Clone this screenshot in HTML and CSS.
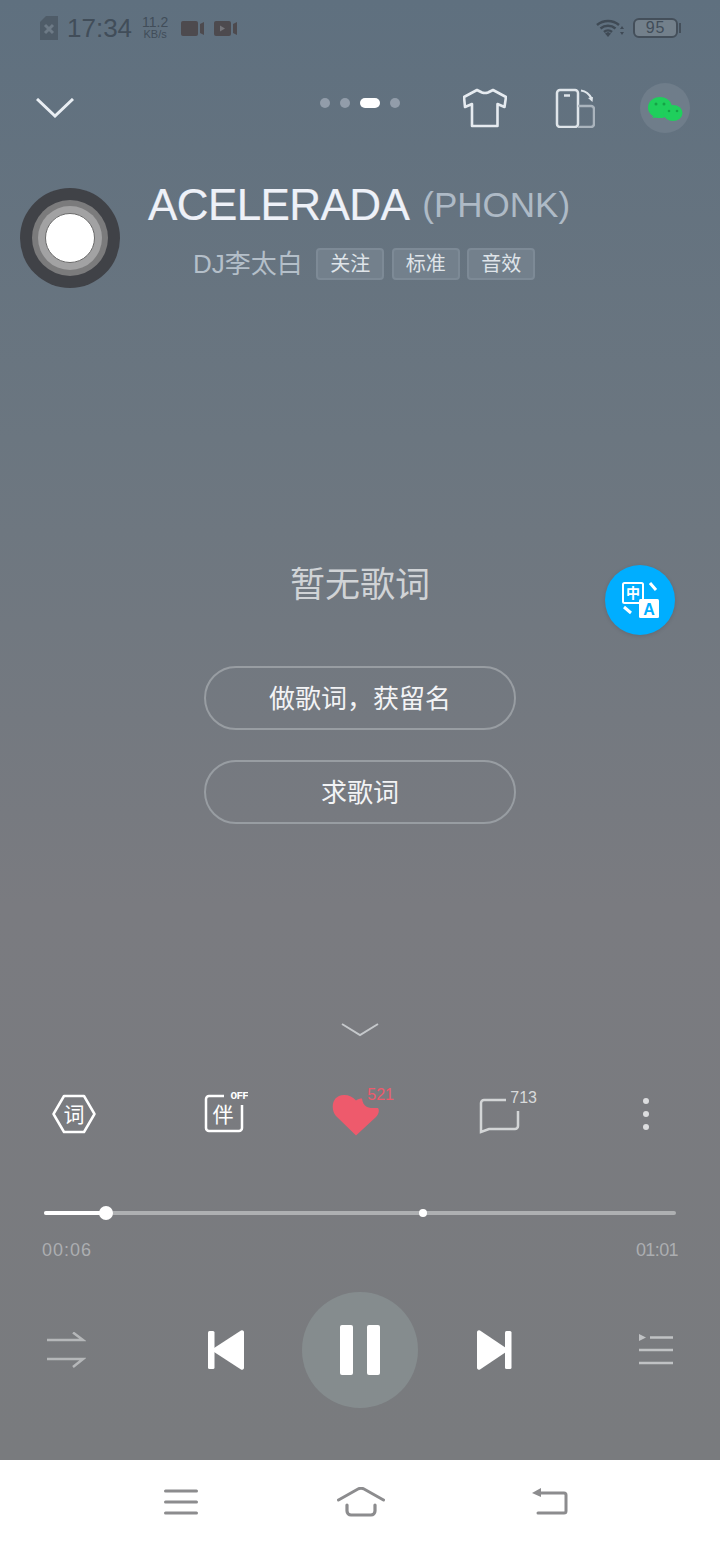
FILE: index.html
```html
<!DOCTYPE html>
<html lang="zh-CN">
<head>
  <meta charset="UTF-8">
  <meta name="viewport" content="width=device-width, initial-scale=1.0">
  <title>ACELERADA (PHONK)</title>
  <link rel="stylesheet" href="styles.css">
</head>
<body>
  <div class="screen">
    <div class="player">

      <!-- status bar -->
      <div class="status">
        <svg class="sd" width="18" height="24" viewBox="0 0 18 24"><path d="M6 0h12v24H0V6z" fill="#4f5c68"/><path d="M5 9l8 8M13 9l-8 8" stroke="#6d7a86" stroke-width="3"/></svg>
        <span class="clock">17:34</span>
        <span class="speed"><b>11.2</b><i>KB/s</i></span>
        <svg class="cam" width="23" height="15" viewBox="0 0 23 15"><rect width="17" height="15" rx="2" fill="#4d4a4e"/><path d="M19 3l4-2v13l-4-2z" fill="#4d4a4e"/></svg>
        <svg class="cam cam-play" width="23" height="15" viewBox="0 0 23 15"><rect width="17" height="15" rx="2" fill="#4d4a4e"/><path d="M6 4.500l5 3-5 3z" fill="#75757a"/><path d="M19 3l4-2v13l-4-2z" fill="#4d4a4e"/></svg>
        <svg class="wifi" width="28" height="20" viewBox="0 0 28 20">
          <path d="M1 7a17 17 0 0 1 22 0M4.500 10.500a11.500 11.500 0 0 1 15 0M8 14a6 6 0 0 1 8 0" fill="none" stroke="#3f4a55" stroke-width="2.500"/>
          <path d="M9 15.500l3-1.500 3 1.500-3 3.500z" fill="#3f4a55"/>
          <path d="M24 11l2-3 2 3zM24 14l2 3 2-3z" fill="#3f4a55"/>
        </svg>
        <div class="battery"><span>95</span></div>
      </div>

      <!-- top actions -->
      <div class="topbar">
        <svg class="back" width="38" height="20" viewBox="0 0 38 20"><path d="M1 1l18 17L37 1" fill="none" stroke="#e9eef3" stroke-width="3"/></svg>
        <div class="dots">
          <span class="dot"></span>
          <span class="dot"></span>
          <span class="dot dot-on"></span>
          <span class="dot"></span>
        </div>
        <svg class="shirt" width="44" height="40" viewBox="0 0 44 40"><path d="M14 2l5 2.500q3 1 6 0L30 2l13 7-1.500 10-7-3V38H9V16l-7 3L1 9z" fill="none" stroke="#e6ebf0" stroke-width="2.600" stroke-linejoin="round"/></svg>
        <svg class="rotate" width="40" height="40" viewBox="0 0 40 40">
          <rect x="2" y="2" width="21" height="37" rx="3" fill="none" stroke="#dfe5ea" stroke-width="2.500"/>
          <path d="M9 7.500h6" stroke="#dfe5ea" stroke-width="2.500"/>
          <path d="M23 18h13a3 3 0 0 1 3 3v15a3 3 0 0 1-3 3H23" fill="none" stroke="#aab4bd" stroke-width="2.500"/>
          <path d="M26 2.500q7 1 10.500 8" fill="none" stroke="#dfe5ea" stroke-width="2.200"/>
          <path d="M33 10l5-1-.5 5z" fill="#dfe5ea"/>
        </svg>
        <div class="wechat">
          <svg width="36" height="26" viewBox="0 0 36 26">
            <ellipse cx="13" cy="12.500" rx="12" ry="10.500" fill="#1fcf5c"/>
            <ellipse cx="26" cy="18" rx="9.500" ry="8" fill="#1fcf5c"/>
            <path d="M5 23l3-4 4 3z" fill="#1fcf5c"/>
            <circle cx="9" cy="9" r="1.500" fill="#15a346"/>
            <circle cx="17" cy="9" r="1.500" fill="#15a346"/>
            <circle cx="22" cy="16" r="1.300" fill="#15a346"/>
            <circle cx="30" cy="16" r="1.300" fill="#15a346"/>
          </svg>
        </div>
      </div>

      <!-- song info -->
      <div class="song">
        <div class="disc"><div class="disc-mid"><div class="disc-in"><div class="disc-hole"></div></div></div></div>
        <div class="song-info">
          <div class="title">ACELERADA <span>(PHONK)</span></div>
          <div class="meta">
            <span class="artist">DJ李太白</span>
            <span class="tag">关注</span>
            <span class="tag">标准</span>
            <span class="tag">音效</span>
          </div>
        </div>
      </div>

      <!-- lyrics -->
      <div class="lyrics">
        <p class="no-lyric">暂无歌词</p>
        <a class="pill pill-first">做歌词，获留名</a>
        <a class="pill">求歌词</a>
        <div class="translate">
          <svg width="70" height="70" viewBox="0 0 70 70">
            <rect x="18" y="18" width="20" height="20" rx="1.500" fill="none" stroke="#fff" stroke-width="2"/>
            <text x="28" y="33" class="tr-zh">中</text>
            <rect x="34" y="34" width="20" height="19" rx="1.500" fill="#fff"/>
            <text x="44" y="50" class="tr-en">A</text>
            <path d="M45 18l6 7M19 42l7 6" stroke="#fff" stroke-width="3"/>
          </svg>
        </div>
      </div>

      <svg class="fold" width="38" height="14" viewBox="0 0 38 14"><path d="M1 1l18 11L37 1" fill="none" stroke="#c5c8cb" stroke-width="2"/></svg>

      <!-- actions -->
      <div class="actions">
        <svg class="act-word" width="44" height="40" viewBox="0 0 44 40">
          <path d="M12 2h20l10.500 18L32 38H12L1.500 20z" fill="none" stroke="#fff" stroke-width="2.500" stroke-linejoin="round"/>
          <text x="22" y="27.500" class="act-zh">词</text>
        </svg>
        <svg class="act-acc" width="44" height="44" viewBox="0 0 44 44">
          <path d="M20 7H5a3 3 0 0 0-3 3v29a3 3 0 0 0 3 3h30a3 3 0 0 0 3-3V16" fill="none" stroke="#fff" stroke-width="2.500"/>
          <text x="19" y="33" class="act-zh">伴</text>
          <text x="44" y="10" class="act-off">OFF</text>
        </svg>
        <div class="act-like">
          <svg width="50" height="44" viewBox="0 0 50 44"><path d="M24 42.500L4 23C-2 16 0 2 12 2c5 0 9 2 12 5.500 2-1.500 4-2 6-2 .5 4 2 7 5 8.500 4 1.500 8 1 11 1 2 3 0 7-2 9z" fill="#ee5a6c"/></svg>
          <span class="like-num">521</span>
        </div>
        <div class="act-comment">
          <svg width="42" height="36" viewBox="0 0 42 36"><path d="M27 2H5a3 3 0 0 0-3 3v29l8-3h26a3 3 0 0 0 3-3V13" fill="none" stroke="#d3d5d6" stroke-width="2.500"/></svg>
          <span class="comment-num">713</span>
        </div>
        <div class="act-more"><i></i><i></i><i></i></div>
      </div>

      <!-- progress -->
      <div class="progress">
        <div class="bar-done"></div>
        <div class="knob"></div>
        <div class="buffer"></div>
      </div>
      <div class="times"><span class="time-now">00:06</span><span class="time-all">01:01</span></div>

      <!-- controls -->
      <div class="controls">
        <svg class="shuffle" width="40" height="36" viewBox="0 0 40 36">
          <path d="M1 8h36L27 .5M1 27h36l-10 8" fill="none" stroke="#b5b7b9" stroke-width="2.500"/>
        </svg>
        <svg class="prev" width="36" height="40" viewBox="0 0 36 40">
          <rect x="0" y="1" width="6.500" height="38" rx="1.500" fill="#fff"/>
          <path d="M3 20L33 .6a2 2 0 0 1 3 1.400v36a2 2 0 0 1-3 1.400z" fill="#fff"/>
        </svg>
        <div class="play"><i></i><i></i></div>
        <svg class="next" width="36" height="40" viewBox="0 0 36 40">
          <rect x="28" y="1" width="6.500" height="38" rx="1.500" fill="#fff"/>
          <path d="M32 20L3 .6A2 2 0 0 0 0 2v36a2 2 0 0 0 3 1.400z" fill="#fff"/>
        </svg>
        <svg class="queue" width="34" height="32" viewBox="0 0 34 32">
          <path d="M0 0l7 3.500L0 7z" fill="#c0c2c4"/>
          <path d="M11 3.500h23M0 16h34M0 29h34" stroke="#c0c2c4" stroke-width="2.500"/>
        </svg>
      </div>
    </div>

    <!-- system nav -->
    <div class="navbar">
      <svg width="34" height="26" viewBox="0 0 34 26"><path d="M1.500 2h31M1.500 13h31M1.500 24h31" stroke="#8c8c8e" stroke-width="3" stroke-linecap="round"/></svg>
      <svg class="nav-home" width="48" height="30" viewBox="0 0 48 30"><path d="M1.500 13L21 2q3-1.500 6 0l19.500 11" fill="none" stroke="#8c8c8e" stroke-width="3" stroke-linecap="round"/><path d="M10 18v6a4 4 0 0 0 4 4h20a4 4 0 0 0 4-4v-6" fill="none" stroke="#8c8c8e" stroke-width="3.200" stroke-linecap="round"/></svg>
      <svg class="nav-back" width="36" height="28" viewBox="0 0 36 28"><path d="M7 5h25a2 2 0 0 1 2 2v16a2 2 0 0 1-2 2H6" fill="none" stroke="#8c8c8e" stroke-width="3" stroke-linecap="round"/><path d="M0 5l9-5v9z" fill="#8c8c8e"/></svg>
    </div>
  </div>
</body>
</html>
```

FILE: styles.css
```css
* {
  box-sizing: border-box;
}

body {
  margin: 0;
  font-family: "Liberation Sans", "Noto Sans CJK SC", sans-serif;
}

svg {
  display: block;
  flex: none;
}

.screen {
  width: 720px;
  height: 1544px;
  display: flex;
  flex-direction: column;
  overflow: hidden;
}

.player {
  height: 1460px;
  background-image: linear-gradient(#5f707f 0%, #6b7680 30%, #7a7b80 62%, #797b7e 100%);
}

/* status bar */
.status {
  height: 56px;
  padding-left: 40px;
  display: flex;
  align-items: center;
  color: #414d59;
}

.clock {
  margin-left: 9px;
  font-size: 26px;
  line-height: 30px;
}

.speed {
  margin-left: 10px;
  display: flex;
  flex-direction: column;
  align-items: center;
  width: 26px;
}

.speed b {
  font-weight: normal;
  font-size: 14px;
  line-height: 13px;
}

.speed i {
  font-style: normal;
  font-size: 11px;
  line-height: 11px;
}

.cam {
  margin-left: 13px;
}

.cam-play {
  margin-left: 10px;
}

.wifi {
  margin-left: 359px;
}

.battery {
  margin-left: 9px;
  width: 45px;
  height: 20px;
  border: 2px solid #444f5a;
  border-radius: 6px;
  background-color: #73808b;
  font-size: 16px;
  line-height: 16px;
  letter-spacing: 1px;
  text-align: center;
  position: relative;
}

.battery::after {
  content: "";
  position: absolute;
  right: -5px;
  top: 3px;
  width: 2px;
  height: 10px;
  background-color: #444f5a;
}

/* top bar */
.topbar {
  margin-top: 24px;
  height: 56px;
  padding-left: 36px;
  display: flex;
  align-items: center;
}

.dots {
  margin-left: 246px;
  margin-bottom: 10px;
  display: flex;
  gap: 10px;
}

.dot {
  width: 10px;
  height: 10px;
  border-radius: 5px;
  background-color: #929daa;
}

.dot-on {
  width: 20px;
  background-color: #fff;
}

.shirt {
  margin-left: 63px;
}

.rotate {
  margin-left: 48px;
}

.wechat {
  margin-left: 45px;
  width: 50px;
  height: 50px;
  border-radius: 50%;
  background-color: #6f7d8a;
  display: flex;
  align-items: center;
  justify-content: center;
}

/* song */
.song {
  margin-top: 44px;
  padding-left: 20px;
  display: flex;
  align-items: flex-start;
  gap: 28px;
}

.disc {
  margin-top: 8px;
  width: 100px;
  height: 100px;
  border-radius: 50%;
  background-color: #404247;
  display: flex;
  align-items: center;
  justify-content: center;
}

.disc-mid {
  width: 76px;
  height: 76px;
  border-radius: 50%;
  background-color: #7b7b7c;
  display: flex;
  align-items: center;
  justify-content: center;
}

.disc-in {
  width: 64px;
  height: 64px;
  border-radius: 50%;
  background-color: #a2a2a3;
  display: flex;
  align-items: center;
  justify-content: center;
}

.disc-hole {
  width: 50px;
  height: 50px;
  border-radius: 50%;
  background-color: #fff;
  border: 1px solid #6a6a6a;
}

.song-info {
  display: flex;
  flex-direction: column;
  align-items: center;
}

.title {
  height: 50px;
  font-size: 44px;
  line-height: 50px;
  color: #eef1f8;
  letter-spacing: -0.6px;
  white-space: nowrap;
  -webkit-text-stroke: 0.2px #eef1f8;
}

.title span {
  margin-left: 4px;
  font-size: 35px;
  color: #aebac6;
  letter-spacing: 0;
  vertical-align: 3px;
  -webkit-text-stroke: 0;
}

.meta {
  margin-top: 18px;
  margin-left: 10px;
  display: flex;
  align-items: center;
  gap: 7.5px;
}

.artist {
  margin-right: 6px;
  font-size: 26px;
  line-height: 32px;
  color: #b4bfc9;
}

.tag {
  width: 68px;
  height: 32px;
  border: 2px solid #7d8a96;
  border-radius: 4px;
  background-color: #73808c;
  color: #dfe4e9;
  font-size: 20px;
  line-height: 28px;
  text-align: center;
}

/* lyrics */
.lyrics {
  position: relative;
  margin-top: 275px;
  display: flex;
  flex-direction: column;
  align-items: center;
}

.no-lyric {
  margin: 0;
  font-size: 35px;
  line-height: 44px;
  color: #d0d3d6;
}

.pill {
  margin-top: 30px;
  width: 312px;
  height: 64px;
  border: 2px solid #989da2;
  border-radius: 32px;
  color: #f2f3f5;
  font-size: 26px;
  line-height: 63px;
  text-align: center;
}

.pill-first {
  margin-top: 59px;
}

.translate {
  position: absolute;
  left: 605px;
  top: 2px;
  width: 70px;
  height: 70px;
  border-radius: 50%;
  background-color: #00aeff;
  box-shadow: 0 1px 4px rgba(0, 0, 0, 0.12);
}

.tr-zh {
  font-size: 14px;
  font-weight: bold;
  fill: #fff;
  text-anchor: middle;
  font-family: "Noto Sans CJK SC", sans-serif;
}

.tr-en {
  font-size: 16px;
  font-weight: bold;
  fill: #00aeff;
  text-anchor: middle;
}

.fold {
  margin: 199px 0 0 341px;
}

/* action row */
.actions {
  margin-top: 47px;
  height: 60px;
  padding-left: 52px;
  display: flex;
  align-items: center;
}

.act-zh {
  font-size: 21px;
  fill: #fff;
  text-anchor: middle;
  font-family: "Noto Sans CJK SC", sans-serif;
}

.act-off {
  font-size: 11px;
  font-weight: bold;
  fill: #fff;
  text-anchor: end;
  letter-spacing: -0.8px;
  font-family: "Liberation Mono", monospace;
}

.act-acc {
  margin-left: 108px;
  margin-top: -6px;
}

.act-like {
  position: relative;
  margin-left: 84px;
  width: 62px;
  height: 44px;
  margin-top: 1px;
}

.like-num {
  position: absolute;
  right: 0;
  top: -7px;
  font-size: 16px;
  line-height: 18px;
  color: #ee5a6c;
}

.act-comment {
  position: relative;
  margin-left: 85px;
  width: 58px;
  height: 36px;
  margin-top: 3px;
}

.comment-num {
  position: absolute;
  right: 0;
  top: -9px;
  font-size: 16px;
  line-height: 18px;
  color: #d8dadb;
}

.act-more {
  margin-left: 106px;
  display: flex;
  flex-direction: column;
  gap: 7px;
}

.act-more i {
  width: 6px;
  height: 6px;
  border-radius: 50%;
  background-color: #dcdddf;
}

/* progress */
.progress {
  position: relative;
  margin: 67px 44px 0;
  height: 4px;
  border-radius: 2px;
  background-color: #aeb0b2;
}

.bar-done {
  width: 62px;
  height: 4px;
  border-radius: 2px;
  background-color: #fff;
}

.knob {
  position: absolute;
  left: 55px;
  top: -5px;
  width: 14px;
  height: 14px;
  border-radius: 50%;
  background-color: #fff;
}

.buffer {
  position: absolute;
  left: 375px;
  top: -2px;
  width: 8px;
  height: 8px;
  border-radius: 50%;
  background-color: #fff;
}

.times {
  margin-top: 25px;
  padding: 0 42px;
  display: flex;
  justify-content: space-between;
  font-size: 18px;
  line-height: 20px;
  color: #acaeb1;
}

.time-now {
  letter-spacing: 1px;
}

.time-all {
  letter-spacing: -0.6px;
}

/* player controls */
.controls {
  margin-top: 32px;
  height: 116px;
  padding-left: 46px;
  display: flex;
  align-items: center;
}

.prev {
  margin-left: 122px;
}

.play {
  margin-left: 58px;
  width: 116px;
  height: 116px;
  border-radius: 50%;
  background-color: #858c8e;
  display: flex;
  align-items: center;
  justify-content: center;
  gap: 14px;
}

.play i {
  width: 13px;
  height: 50px;
  border-radius: 2px;
  background-color: #fff;
}

.next {
  margin-left: 59px;
}

.queue {
  margin-left: 126px;
}

/* system nav */
.navbar {
  height: 84px;
  background-color: #fff;
  padding-left: 164px;
  display: flex;
  align-items: center;
}

.nav-home {
  margin-left: 139px;
}

.nav-back {
  margin-left: 147px;
}
```
